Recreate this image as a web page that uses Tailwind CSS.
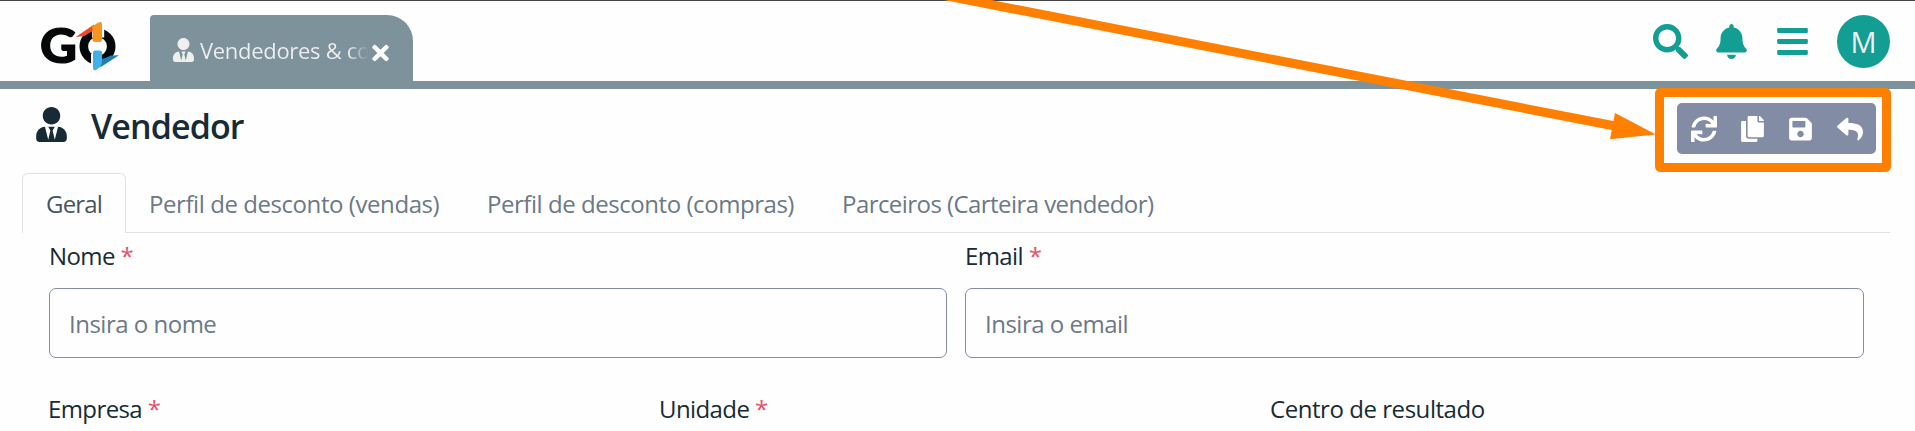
<!DOCTYPE html>
<html lang="pt-BR">
<head>
<meta charset="utf-8">
<title>Vendedor</title>
<script src="https://cdn.jsdelivr.net/npm/@tailwindcss/browser@4"></script>
</head>
<body class="relative h-[431px] w-[1915px] overflow-hidden bg-[#fefefe] font-['Open_Sans','Noto_Sans',sans-serif] text-2xl text-[#172b36]">
<header class="flex h-[89px] items-stretch border-t border-b-8 border-t-[#444] border-b-[#7e929c] bg-[#fefefe]">
  <div class="w-[150px] pt-[14px] pl-9">
    <svg class="h-[60px] w-[90px]" viewBox="36 15 90 60">
      <text x="40" y="63.3" font-family="Lato" font-weight="900" font-size="48" fill="#050808" stroke="#050808" stroke-width="1.2" textLength="37" lengthAdjust="spacingAndGlyphs">G</text>
      <ellipse cx="97.500" cy="46.500" rx="13.700" ry="13.700" fill="none" stroke="#050808" stroke-width="8.600"/>
      <path d="M92 26h12.200v11.500H92zM91 54h11v13H91z" fill="#fefefe"/>
      <path d="M75.700 37L94 24.500V31Q91 31.500 84.500 36z" fill="#ee4a25"/>
      <path d="M92.500 31Q92.500 28 92 26.500L98.500 22.500Q102 21 102 24V40Q102 42 100 42H94.500Q92.500 42 92.500 40z" fill="#f79522"/>
      <path d="M119 55.300L100 67.500L101.500 59Q106 58 111 55.500z" fill="#1c7fb5"/>
      <path d="M93 52.500Q93 50.500 95 50.500H100Q102 50.500 102 52.500V61Q102 65 100.500 66.500L96 70Q93 71 93 68z" fill="#3fb1e6"/>
    </svg>
  </div>
  <div class="mt-[14px] flex w-[263px] rounded-tl rounded-tr-[26px] bg-[#7e929c] pt-[23px] pl-[23px] text-[#efefef]">
    <svg class="h-6 w-[21px] shrink-0" viewBox="0 0 448 512" fill="currentColor"><path d="M224 256c70.700 0 128-57.300 128-128S294.700 0 224 0 96 57.300 96 128s57.300 128 128 128zm95.800 32.600L272 480l-32-136 32-56h-96l32 56-32 136-47.800-191.400C56.900 292 0 350.300 0 422.400V464c0 26.500 21.500 48 48 48h352c26.500 0 48-21.500 48-48v-41.600c0-72.100-56.900-130.400-128.200-133.800z"/></svg>
    <span class="mt-[-3px] ml-[6px] h-8 w-[172px] overflow-hidden bg-linear-to-r from-[#efefef] from-86% to-transparent to-98% bg-clip-text text-[22px] leading-[30px] tracking-[-0.3px] whitespace-nowrap text-transparent">Vendedores &amp; co</span>
    <svg class="mt-[3px] h-6 w-[17px] shrink-0 text-white" viewBox="0 0 352 512" fill="currentColor"><path d="M242.720 256l100.070-100.070c12.280-12.280 12.280-32.190 0-44.480l-22.240-22.240c-12.280-12.280-32.190-12.280-44.480 0L176 189.280 75.930 89.210c-12.280-12.280-32.190-12.280-44.480 0L9.210 111.450c-12.280 12.280-12.280 32.190 0 44.480L109.280 256 9.210 356.070c-12.280 12.280-12.280 32.190 0 44.480l22.240 22.240c12.280 12.280 32.200 12.280 44.480 0L176 322.720l100.070 100.070c12.280 12.280 32.200 12.280 44.480 0l22.240-22.240c12.280-12.280 12.280-32.190 0-44.480L242.720 256z"/></svg>
  </div>
  <div class="mt-[14px] mr-[25px] ml-auto flex h-[53px] items-center text-[#139e94]">
    <svg class="size-[35px]" viewBox="0 0 512 512" fill="currentColor"><path d="M505 442.700L405.300 343c-4.500-4.500-10.600-7-17-7H372c27.600-35.300 44-79.700 44-128C416 93.100 322.900 0 208 0S0 93.100 0 208s93.100 208 208 208c48.300 0 92.700-16.400 128-44v16.300c0 6.400 2.500 12.500 7 17l99.700 99.700c9.400 9.400 24.600 9.400 33.900 0l28.300-28.300c9.400-9.400 9.400-24.600.1-34zM208 336c-70.700 0-128-57.200-128-128 0-70.700 57.200-128 128-128 70.700 0 128 57.200 128 128 0 70.700-57.200 128-128 128z"/></svg>
    <svg class="ml-[28px] h-[35px] w-[31px]" viewBox="0 0 448 512" fill="currentColor"><path d="M224 512c35.320 0 63.970-28.650 63.970-64H160.030c0 35.350 28.650 64 63.970 64zm215.390-149.710c-19.320-20.760-55.470-51.990-55.470-154.290 0-77.700-54.480-139.900-127.940-155.160V32c0-17.670-14.320-32-31.980-32s-31.980 14.330-31.980 32v20.840C118.560 68.100 64.080 130.300 64.080 208c0 102.300-36.150 133.530-55.470 154.290-6 6.450-8.660 14.160-8.610 21.710.11 16.400 12.980 32 32.100 32h383.800c19.120 0 32-15.600 32.100-32 .05-7.550-2.610-15.270-8.610-21.710z"/></svg>
    <svg class="ml-[30px] h-[35px] w-[31px]" viewBox="0 0 448 512" fill="currentColor"><rect y="60" width="448" height="72" rx="16"/><rect y="220" width="448" height="72" rx="16"/><rect y="380" width="448" height="72" rx="16"/></svg>
    <div class="ml-[29px] flex size-[53px] items-center justify-center rounded-full bg-[#139e94] pt-px text-[29px] text-[#efefef]">M</div>
  </div>
</header>
<main>
  <div class="flex h-[84px] items-start pl-9">
    <svg class="mt-[18px] h-[35px] w-[31px]" viewBox="0 0 448 512" fill="currentColor"><path d="M224 256c70.700 0 128-57.300 128-128S294.700 0 224 0 96 57.300 96 128s57.300 128 128 128zm95.800 32.600L272 480l-32-136 32-56h-96l32 56-32 136-47.800-191.400C56.900 292 0 350.300 0 422.400V464c0 26.500 21.500 48 48 48h352c26.500 0 48-21.500 48-48v-41.600c0-72.100-56.900-130.400-128.200-133.800z"/></svg>
    <h1 class="mt-[13px] ml-6 text-[34px] leading-[48px] font-semibold tracking-[-0.9px]">Vendedor</h1>
    <div class="mt-[14px] mr-[39px] ml-auto flex h-[51px] w-[199px] items-center rounded-[5px] bg-[#828da5] pl-[14px] text-white">
      <svg class="size-[26px]" viewBox="0 0 512 512" fill="currentColor"><path d="M440.650 12.570l4 82.770A247.160 247.160 0 0 0 255.830 8C134.730 8 33.910 94.920 12.290 209.820A12 12 0 0 0 24.090 224h49.050a12 12 0 0 0 11.670-9.260 175.910 175.910 0 0 1 317-56.940l-101.460-4.860a12 12 0 0 0-12.570 12v47.410a12 12 0 0 0 12 12H500a12 12 0 0 0 12-12V12a12 12 0 0 0-12-12h-47.370a12 12 0 0 0-11.980 12.570zM255.830 432a175.610 175.610 0 0 1-146-77.800l101.800 4.870a12 12 0 0 0 12.570-12v-47.400a12 12 0 0 0-12-12H12a12 12 0 0 0-12 12V500a12 12 0 0 0 12 12h47.350a12 12 0 0 0 12-12.600l-4.150-82.570A247.170 247.170 0 0 0 255.830 504c121.110 0 221.930-86.920 243.550-201.820a12 12 0 0 0-11.800-14.180h-49.050a12 12 0 0 0-11.670 9.260A175.860 175.860 0 0 1 255.830 432z"/></svg>
      <svg class="ml-[24px] h-[26px] w-[23px]" viewBox="0 0 448 512" fill="currentColor"><path d="M320 448v40c0 13.255-10.745 24-24 24H24c-13.255 0-24-10.745-24-24V120c0-13.255 10.745-24 24-24h72v296c0 30.879 25.121 56 56 56h168zm0-344V0H152c-13.255 0-24 10.745-24 24v368c0 13.255 10.745 24 24 24h272c13.255 0 24-10.745 24-24V128H344c-13.200 0-24-10.800-24-24zm120.971-31.029L375.029 7.029A24 24 0 0 0 358.059 0H352v96h96v-6.059a24 24 0 0 0-7.029-16.970z"/></svg>
      <svg class="ml-[25px] h-[26px] w-[23px]" viewBox="0 0 448 512" fill="currentColor"><path d="M433.941 129.941l-83.882-83.882A48 48 0 0 0 316.118 32H48C21.490 32 0 53.490 0 80v352c0 26.510 21.490 48 48 48h352c26.510 0 48-21.490 48-48V163.882a48 48 0 0 0-14.059-33.941zM224 416c-35.346 0-64-28.654-64-64 0-35.346 28.654-64 64-64s64 28.654 64 64c0 35.346-28.654 64-64 64zm96-304.520V212c0 6.627-5.373 12-12 12H76c-6.627 0-12-5.373-12-12V108c0-6.627 5.373-12 12-12h228.520c3.183 0 6.235 1.264 8.485 3.515l3.480 3.480A11.996 11.996 0 0 1 320 111.480z"/></svg>
      <svg class="ml-[25px] size-[26px]" viewBox="0 0 512 512" fill="currentColor"><path d="M8.309 189.836L184.313 37.851C199.719 24.546 224 35.347 224 56.015v80.053c160.629 1.839 288 34.032 288 186.258 0 61.441-39.581 122.309-83.333 154.132-13.653 9.931-33.111-2.533-28.077-18.631 45.344-145.012-21.507-183.510-176.590-185.742V360c0 20.700-24.300 31.453-39.687 18.164l-176.004-152c-11.071-9.562-11.086-26.753 0-36.328z"/></svg>
    </div>
  </div>
  <nav class="mr-[25px] ml-[22px] flex h-[60px] leading-[61px] whitespace-nowrap text-[#6c7986]">
    <div class="w-[104px] rounded-t-[6px] border border-b-0 border-[#dee0e6] pl-[23px] leading-[59px] tracking-[-0.8px] text-[#495561]">Geral</div>
    <div class="flex h-[60px] grow border-b border-[#dee0e6]">
      <span class="w-[339px] pl-[23px] tracking-[-0.43px]">Perfil de desconto (vendas)</span>
      <span class="w-[355px] pl-[22px] tracking-[-0.45px]">Perfil de desconto (compras)</span>
      <span class="pl-[22px] tracking-[-0.56px]">Parceiros (Carteira vendedor)</span>
    </div>
  </nav>
  <div class="mr-[51px] ml-[49px] grid grid-cols-[898px_899px] gap-x-[18px]">
    <div>
      <label class="block h-[55px] pt-[5px] leading-[36px] tracking-[-0.6px]">Nome <span class="text-[#e8506a]">*</span></label>
      <div class="h-[70px] rounded-[7px] border border-[#828da5] pl-[19px] leading-[70px] tracking-[-0.5px] text-[#6c7986]">Insira o nome</div>
    </div>
    <div>
      <label class="block h-[55px] pt-[5px] leading-[36px] tracking-[-0.6px]">Email <span class="text-[#e8506a]">*</span></label>
      <div class="h-[70px] rounded-[7px] border border-[#828da5] pl-[19px] leading-[70px] tracking-[-0.5px] text-[#6c7986]">Insira o email</div>
    </div>
  </div>
  <div class="mt-[33px] mr-[34px] ml-[48px] grid grid-cols-3 leading-[36px]">
    <div class="tracking-[-0.6px]">Empresa <span class="text-[#e8506a]">*</span></div>
    <div class="tracking-[-0.6px]">Unidade <span class="text-[#e8506a]">*</span></div>
    <div class="tracking-[-0.45px]">Centro de resultado</div>
  </div>
</main>
<!-- Highlight over the toolbar -->
<svg class="absolute inset-0 h-[431px] w-[1915px]" viewBox="0 0 1915 431">
  <path d="M929 -7.500L1615 126" fill="none" stroke="#ff8000" stroke-width="9"/>
  <path d="M1615 113L1656 134.500L1610 139.300z" fill="#ff8000"/>
  <rect x="1659.500" y="92.500" width="227" height="75" rx="1" fill="none" stroke="#ff8000" stroke-width="9"/>
</svg>
</body>
</html>
